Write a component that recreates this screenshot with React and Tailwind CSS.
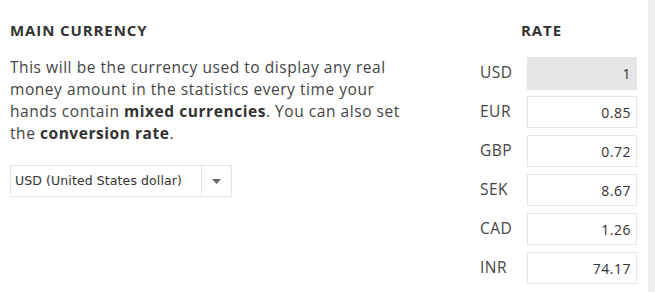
import React from 'react';

const rates = [
  { code: 'USD', value: '1', base: true },
  { code: 'EUR', value: '0.85' },
  { code: 'GBP', value: '0.72' },
  { code: 'SEK', value: '8.67' },
  { code: 'CAD', value: '1.26' },
  { code: 'INR', value: '74.17' },
];

export default function App() {
  return (
    <div className="w-[655px] h-[292px] bg-white flex font-['Open_Sans',sans-serif] text-[#3a3a3a] overflow-hidden">
      <div className="flex-1 flex">
        {/* Main currency column */}
        <div className="w-[480px] shrink-0 pl-[10px] pt-[20px]">
          <h3 className="text-[15px] font-bold text-[#333] leading-[20px] tracking-[0.9px]">MAIN CURRENCY</h3>
          <p className="mt-[16px] text-[15.5px] leading-[22px] text-[#444] w-[410px] tracking-[0.55px]">
            This will be the currency used to display any real money amount in the statistics every time your hands contain{' '}
            <b className="font-bold text-[#333]">mixed currencies</b>. You can also set the{' '}
            <b className="font-bold text-[#333]">conversion rate</b>.
          </p>
          <div className="mt-[21px] w-[222px] h-[32px] border border-[#e6e6e6] flex items-center">
            <span className="flex-1 pl-[4px] text-[12.5px] text-[#333] font-['DejaVu_Sans',sans-serif] tracking-[0.1px]">
              USD (United States dollar)
            </span>
            <span className="w-[30px] h-full border-l border-[#e6e6e6] flex items-center justify-center">
              <svg width="9" height="5" viewBox="0 0 9 5">
                <path d="M0 0h9L4.5 5z" fill="#666" />
              </svg>
            </span>
          </div>
        </div>

        {/* Rate column */}
        <div className="flex-1 pt-[20px]">
          <div className="ml-[41px] h-[20px] text-[15px] font-bold text-[#333] leading-[20px] tracking-[0.9px]">RATE</div>
          <div className="mt-[17px] flex flex-col gap-[7px]">
            {rates.map((r) => (
              <div key={r.code} className="flex items-center h-[32px]">
                <span className="w-[47px] text-[15.5px] text-[#444] tracking-[0.5px]">{r.code}</span>
                <div
                  className={
                    r.base
                      ? 'w-[110px] h-[33px] bg-[#e6e6e6] flex items-center justify-end pr-[6px] text-[14px] text-[#333] tracking-[0.5px]'
                      : 'w-[110px] h-[32px] border border-[#e6e6e6] bg-white flex items-center justify-end pr-[5px] text-[14px] text-[#333] tracking-[0.5px]'
                  }
                >
                  {r.value}
                </div>
              </div>
            ))}
          </div>
        </div>
      </div>
      <div className="w-[7px] h-full bg-[#f0f0f0]" />
    </div>
  );
}
